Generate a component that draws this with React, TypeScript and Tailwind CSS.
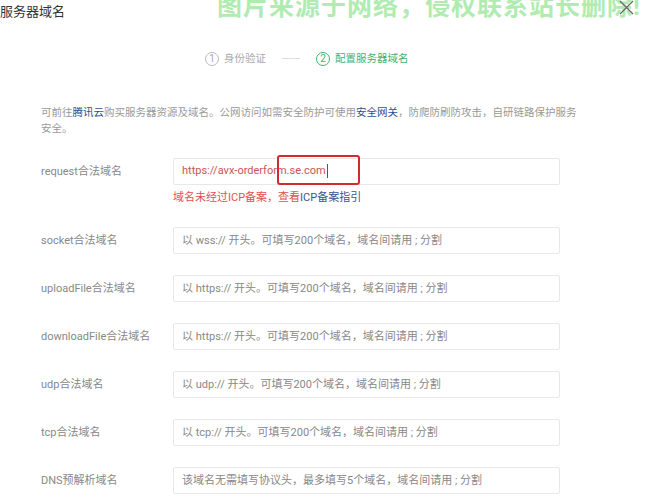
import React from "react";

const rows = [
  { label: "socket合法域名", placeholder: "以 wss:// 开头。可填写200个域名，域名间请用 ; 分割" },
  { label: "uploadFile合法域名", placeholder: "以 https:// 开头。可填写200个域名，域名间请用 ; 分割" },
  { label: "downloadFile合法域名", placeholder: "以 https:// 开头。可填写200个域名，域名间请用 ; 分割" },
  { label: "udp合法域名", placeholder: "以 udp:// 开头。可填写200个域名，域名间请用 ; 分割" },
  { label: "tcp合法域名", placeholder: "以 tcp:// 开头。可填写200个域名，域名间请用 ; 分割" },
  { label: "DNS预解析域名", placeholder: "该域名无需填写协议头，最多填写5个域名，域名间请用 ; 分割" },
];

function Step({ n, text, active }: { n: number; text: string; active?: boolean }) {
  return (
    <div className={`flex items-center gap-[5px] ${active ? "text-[#3cb371]" : "text-[#aaa]"}`}>
      <span
        className={`w-[14px] h-[14px] rounded-full border text-[10px] leading-none flex items-center justify-center ${
          active ? "border-[#3cb371]" : "border-[#bbb]"
        }`}
      >
        {n}
      </span>
      <span className="text-[10.5px]">{text}</span>
    </div>
  );
}

export default function App() {
  return (
    <div
      className="relative w-[654px] h-[500px] bg-white overflow-hidden text-[#333]"
      style={{ fontFamily: 'Roboto, "Noto Sans CJK SC", sans-serif' }}
    >
      {/* watermark + close */}
      <div className="absolute left-[217px] top-[-12px] text-[25px] font-bold text-[#8fe48f] opacity-70 tracking-[1px] whitespace-nowrap">
        图片来源于网络，侵权联系站长删除!
      </div>
      <svg className="absolute left-[619px] top-[0px]" width="15" height="15" viewBox="0 0 15 15">
        <path d="M1 1L14 14M14 1L1 14" stroke="#666" strokeWidth="1.2" />
      </svg>

      <div className="pt-[3px] text-[13px] leading-[18px]">服务器域名</div>

      {/* steps */}
      <div className="mt-[30px] ml-[205px] flex items-center gap-[16px]">
        <Step n={1} text="身份验证" />
        <div className="w-[18px] h-px bg-[#ddd]" />
        <Step n={2} text="配置服务器域名" active />
      </div>

      {/* description */}
      <div className="mt-[38px] ml-[41px] w-[538px] text-[10.5px] leading-[16px] text-[#999]">
        可前往<span className="text-[#2d4f8f]">腾讯云</span>购买服务器资源及域名。公网访问如需安全防护可使用
        <span className="text-[#2d4f8f]">安全网关</span>，防爬防刷防攻击，自研链路保护服务安全。
      </div>

      {/* form */}
      <div className="mt-[21px] flex flex-col">
        <div className="flex">
          <div className="w-[173px] pl-[41px] pt-[6px] text-[11px] text-[#888]">request合法域名</div>
          <div className="relative">
            <div className="w-[387px] h-[27px] border border-[#e8e8e8] rounded-[2px] flex items-center px-[8px] text-[11px] text-[#c8555a]">
              https://avx-orderform.se.com<span className="w-px h-[14px] bg-[#555] ml-px" />
            </div>
            <div className="absolute left-[104px] top-[-3px] w-[83px] h-[30px] border-2 border-[#d42a2f] rounded-[3px]" />
            <div className="mt-[5px] text-[11px] text-[#e05050]">
              域名未经过ICP备案，查看<span className="text-[#3a5590]">ICP备案指引</span>
            </div>
          </div>
        </div>

        {rows.map((r) => (
          <div key={r.label} className="flex mt-[21px]">
            <div className="w-[173px] pl-[41px] pt-[6px] text-[11px] text-[#888]">{r.label}</div>
            <div className="w-[387px] h-[27px] border border-[#e8e8e8] rounded-[2px] flex items-center px-[8px] text-[11px] text-[#888]">
              {r.placeholder}
            </div>
          </div>
        ))}
      </div>
    </div>
  );
}
